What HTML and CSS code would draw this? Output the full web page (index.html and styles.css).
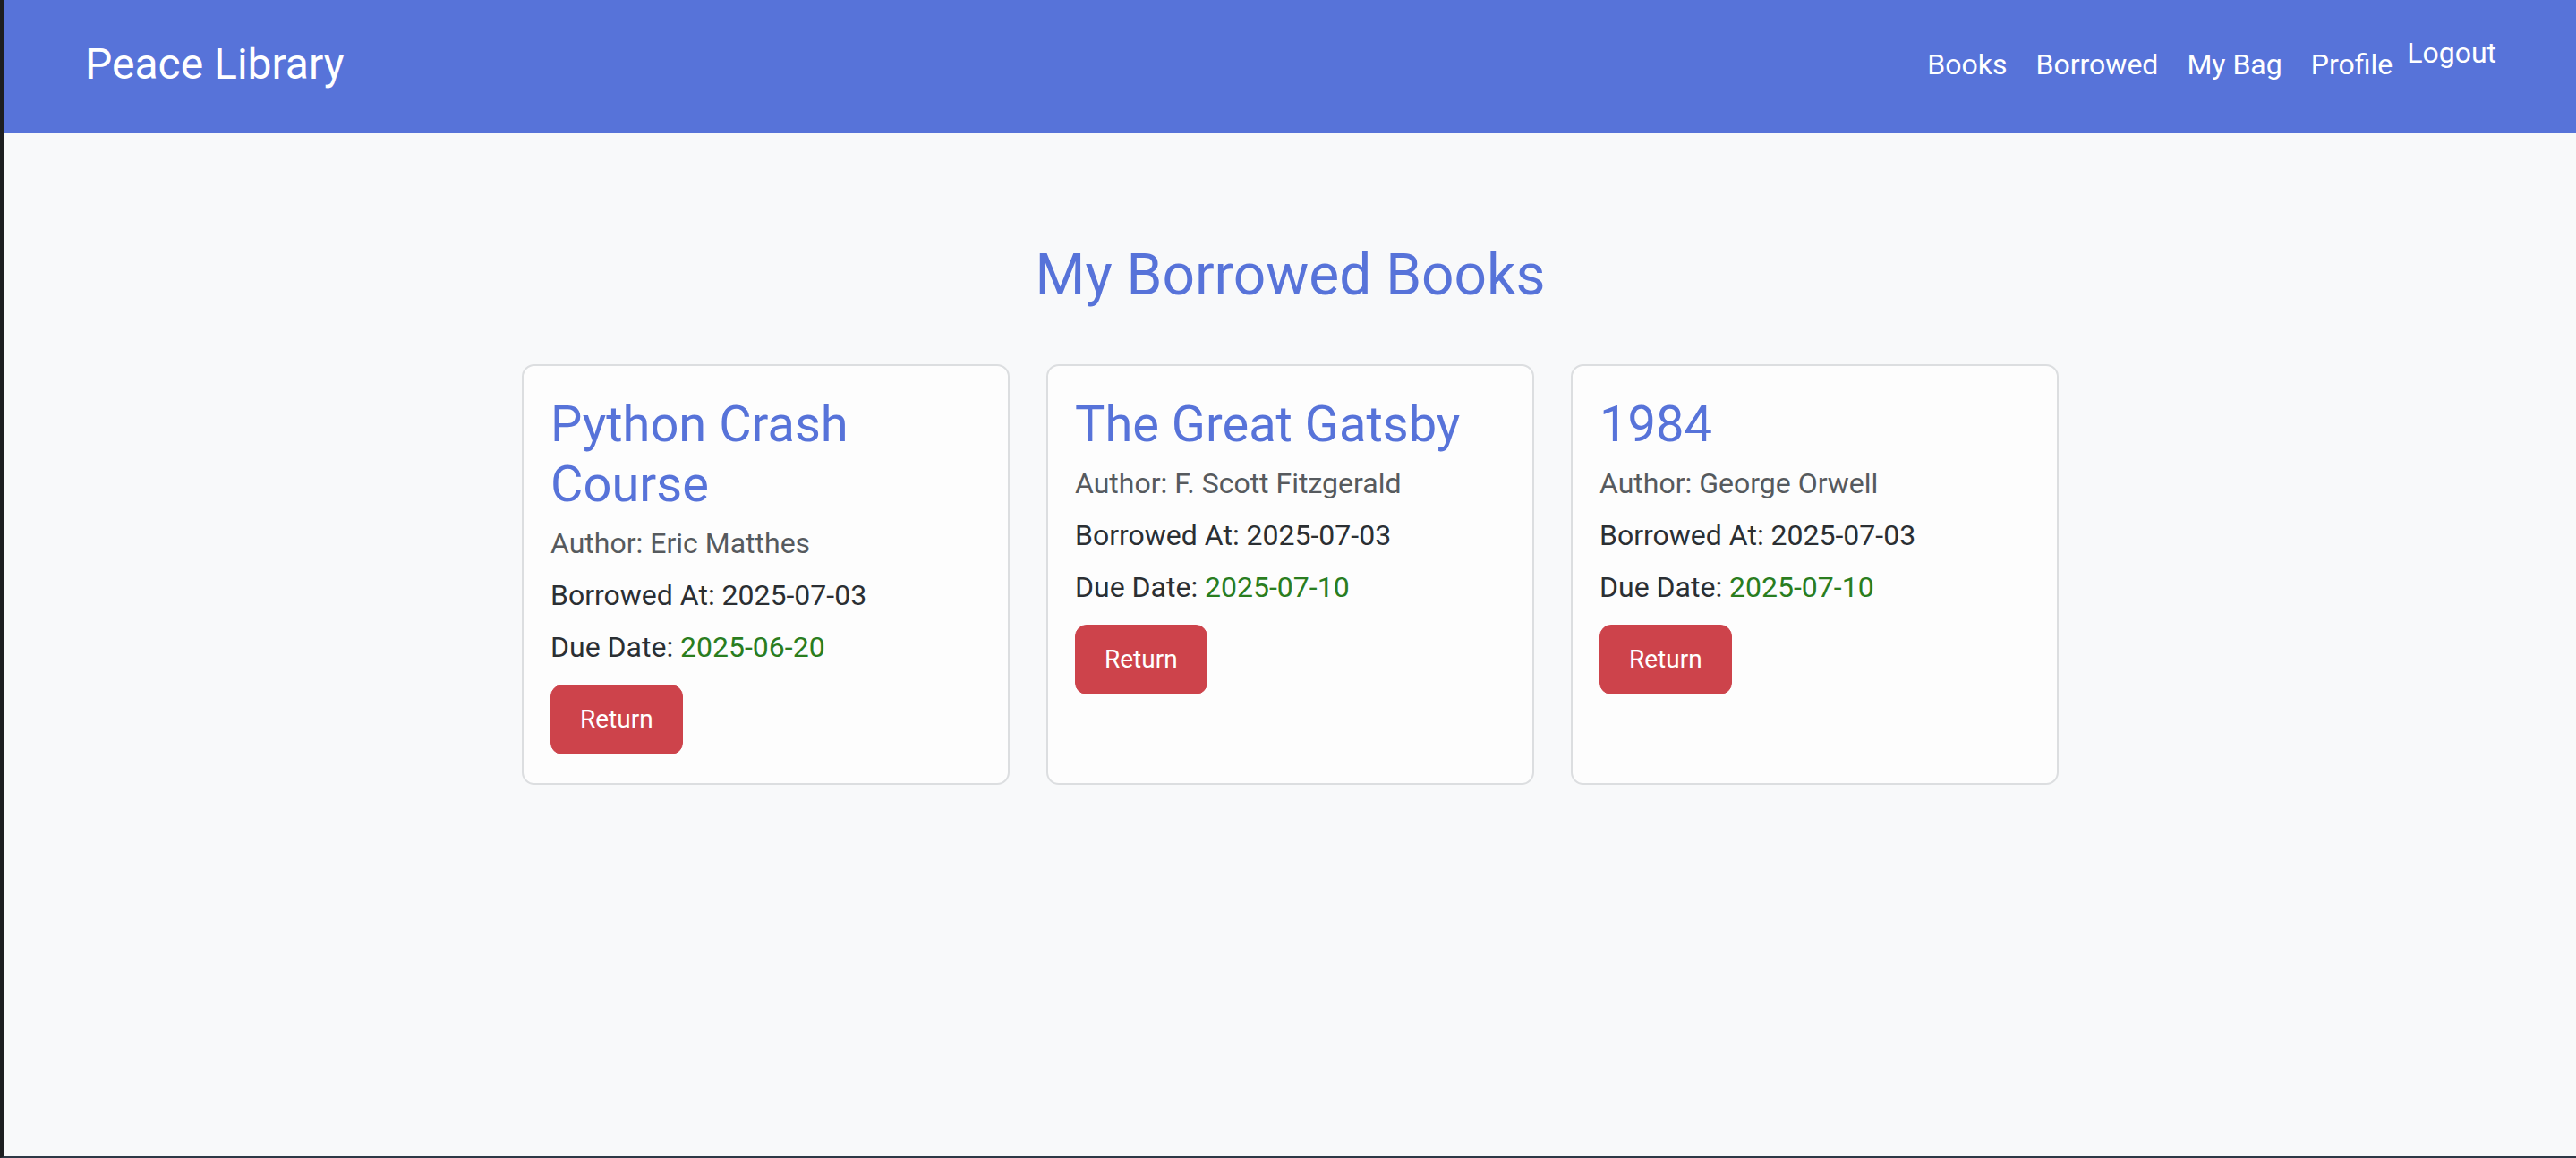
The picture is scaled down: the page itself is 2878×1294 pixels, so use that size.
FILE: index.html
```html
<!DOCTYPE html>
<html lang="en">
<head>
<meta charset="utf-8">
<title>Peace Library - My Borrowed Books</title>
<link rel="stylesheet" href="styles.css">
</head>
<body>
<nav class="navbar">
  <a class="brand" href="#">Peace Library</a>
  <ul class="nav-links">
    <li><a class="nav-link" href="#">Books</a></li>
    <li><a class="nav-link" href="#">Borrowed</a></li>
    <li><a class="nav-link" href="#">My Bag</a></li>
    <li><a class="nav-link" href="#">Profile</a></li>
    <li class="logout-item"><form class="logout-form"><button type="button" class="logout">Logout</button></form></li>
  </ul>
</nav>
<main class="container">
  <h2 class="page-title">My Borrowed Books</h2>
  <div class="card-row">
    <div class="card">
      <div class="card-body">
        <h3 class="card-title">Python Crash Course</h3>
        <p class="card-text muted">Author: Eric Matthes</p>
        <p class="card-text">Borrowed At: 2025-07-03</p>
        <p class="card-text last">Due Date: <span class="due">2025-06-20</span></p>
        <button type="button" class="btn-return">Return</button>
      </div>
    </div>
    <div class="card">
      <div class="card-body">
        <h3 class="card-title">The Great Gatsby</h3>
        <p class="card-text muted">Author: F. Scott Fitzgerald</p>
        <p class="card-text">Borrowed At: 2025-07-03</p>
        <p class="card-text last">Due Date: <span class="due">2025-07-10</span></p>
        <button type="button" class="btn-return">Return</button>
      </div>
    </div>
    <div class="card">
      <div class="card-body">
        <h3 class="card-title">1984</h3>
        <p class="card-text muted">Author: George Orwell</p>
        <p class="card-text">Borrowed At: 2025-07-03</p>
        <p class="card-text last">Due Date: <span class="due">2025-07-10</span></p>
        <button type="button" class="btn-return">Return</button>
      </div>
    </div>
  </div>
</main>
</body>
</html>
```

FILE: styles.css
```css
* { box-sizing: border-box; }

html, body {
  margin: 0;
  padding: 0;
}

body {
  font-family: Roboto, "Liberation Sans", Arial, sans-serif;
  background: #f8f9fa;
  color: #212529;
  min-height: 1294px;
  border-left: 5px solid #1d1e20;
  border-bottom: 2px solid #2e3846;
}

.navbar {
  height: 149px;
  background: #5773d9;
  display: flex;
  align-items: center;
  justify-content: space-between;
  padding: 0 89px 6px 90px;
}

.brand {
  color: #ffffff;
  text-decoration: none;
  font-size: 48px;
  line-height: 72px;
}

.nav-links {
  list-style: none;
  margin: 0;
  padding: 0;
  display: flex;
  align-items: center;
}

.nav-link {
  display: block;
  color: #ffffff;
  text-decoration: none;
  font-size: 32px;
  line-height: 48px;
  padding: 0 16px;
}

.logout-item {
  margin-bottom: 26px;
}

.logout-form {
  margin: 0;
}

.logout {
  background: none;
  border: none;
  padding: 0;
  margin: 0;
  color: #ffffff;
  font-family: inherit;
  font-size: 32px;
  line-height: 48px;
  cursor: pointer;
}

.container {
  padding-top: 121px;
}

.page-title {
  margin: 0 0 60px;
  text-align: center;
  color: #5773d9;
  font-size: 64px;
  font-weight: 400;
  line-height: 1.2;
}

.card-row {
  display: flex;
  justify-content: center;
  gap: 41px;
}

.card {
  width: 545px;
  background: #fdfdfd;
  border: 2px solid #dcdee0;
  border-radius: 14px;
}

.card-body {
  padding: 32px 30px;
}

.card-title {
  margin: 0 0 8px;
  color: #5773d9;
  font-size: 56px;
  font-weight: 400;
  line-height: 1.2;
}

.card-text {
  margin: 0 0 10px;
  font-size: 32px;
  line-height: 48px;
  color: #2b2f33;
}

.card-text.muted {
  color: #565a5e;
}

.card-text.last {
  margin-bottom: 18px;
}

.due {
  color: #2a7d1f;
}

.btn-return {
  background: #cd434b;
  color: #ffffff;
  border: 1px solid #cd434b;
  border-radius: 13px;
  font-family: inherit;
  font-size: 28px;
  line-height: 42px;
  padding: 17px 32px;
  cursor: pointer;
}
```
